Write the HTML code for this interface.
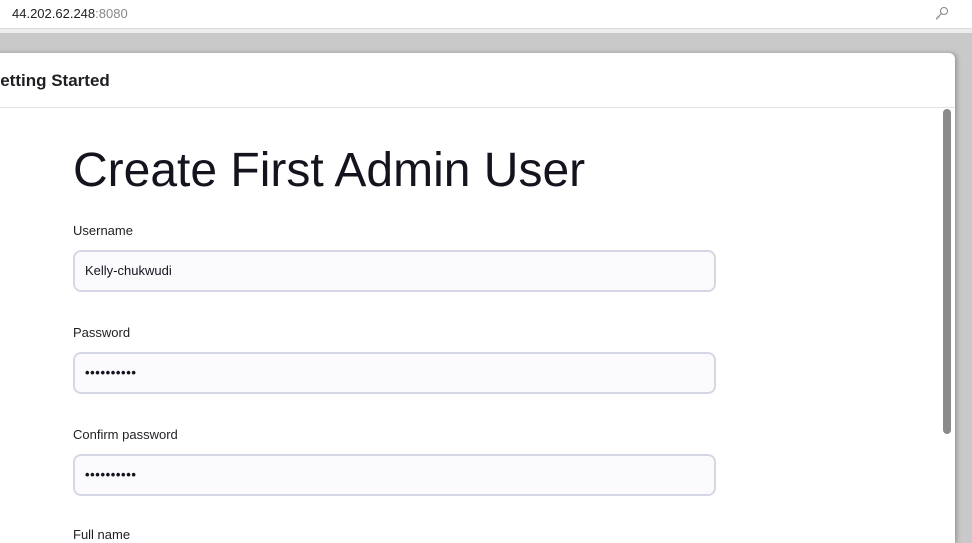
<!DOCTYPE html>
<html><head><style>
body{margin:0;width:972px;height:534px;overflow:hidden;background:#c9c9c9;font-family:"Liberation Sans",sans-serif;position:relative}
.bar{position:absolute;left:0;top:0;width:972px;height:28px;background:#fff;border-bottom:1px solid #dcdcdc}
.url{position:absolute;left:12px;top:6px;font-size:13px;color:#222}
.url span{color:#888}
.key{position:absolute;left:934px;top:5px}
.gray{position:absolute;top:29px;left:0;width:972px;height:4px;background:#ececec}
.dlg{position:absolute;left:-10px;top:53px;width:965px;height:490px;background:#fff;border-radius:0 6px 0 0;box-shadow:2px 0 4px rgba(0,0,0,.25)}
.hd{height:54px;border-bottom:1px solid #e3e3e3;position:relative}
.hd div{position:absolute;left:-3px;top:18px;font-size:17px;font-weight:bold;color:#1f1f24}
.thumb{position:absolute;left:953px;top:56px;width:8px;height:325px;background:#8a8a8a;border-radius:4px}
h1{position:absolute;left:83px;top:90px;margin:0;font-size:48px;font-weight:normal;color:#14141f}
.lbl{position:absolute;left:83px;font-size:13px;color:#1f1f24}
.inp{position:absolute;left:83px;width:629px;height:38px;border:2px solid #d5d8e4;border-radius:8px;background:#fbfbfd;font-size:13px;color:#14141f;line-height:38px;padding-left:10px;box-sizing:content-box}
.dots{font-size:13px;letter-spacing:0.6px;font-weight:bold}
</style></head><body>
<div class="bar"><div class="url">44.202.62.248<span>:8080</span></div>
<svg class="key" width="16" height="16" viewBox="0 0 16 16" fill="none" stroke="#888" stroke-width="1.1"><circle cx="10" cy="6" r="3.5"/><path d="M7.5 8.5L2.5 13.5L3.5 14.5M4.5 11.5L5.5 12.5"/></svg></div>
<div class="gray"></div>
<div class="dlg">
<div class="hd"><div>Getting Started</div></div>
<div class="thumb"></div>
<h1>Create First Admin User</h1>
<div class="lbl" style="top:170px">Username</div>
<div class="inp" style="top:197px">Kelly-chukwudi</div>
<div class="lbl" style="top:272px">Password</div>
<div class="inp dots" style="top:299px">••••••••••</div>
<div class="lbl" style="top:374px">Confirm password</div>
<div class="inp dots" style="top:401px">••••••••••</div>
<div class="lbl" style="top:474px">Full name</div>
</div>
</body></html>
